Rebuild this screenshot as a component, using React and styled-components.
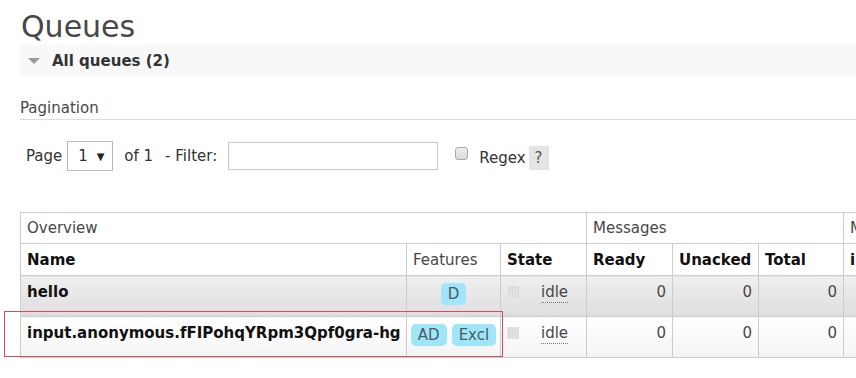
import React from "react";
import styled, { createGlobalStyle } from "styled-components";

const GlobalStyle = createGlobalStyle`
  html, body { margin: 0; padding: 0; background: #fff; overflow: hidden; }
  body { font-family: "DejaVu Sans", Verdana, sans-serif; color: #484848; }
`;

const Page = styled.div`
  position: relative;
  width: 836px;
  height: 378px;
  padding-left: 20px;
  overflow: hidden;
`;

const Title = styled.h1`
  margin: 0 0 2px 1px;
  padding-top: 10px;
  font-size: 30px;
  line-height: 33px;
  font-weight: normal;
  color: #484848;
`;

const SectionBar = styled.div`
  display: flex;
  align-items: center;
  height: 31px;
  background: #f8f8f8;
  font-size: 15px;
  font-weight: bold;
  color: #333;
`;

const Arrow = styled.span`
  width: 0;
  height: 0;
  margin: 0 12px 0 8px;
  border-left: 6px solid transparent;
  border-right: 6px solid transparent;
  border-top: 6px solid #999;
`;

const SubHeading = styled.h3`
  margin: 22px 0 0;
  padding-bottom: 1px;
  font-size: 15px;
  line-height: 20px;
  font-weight: normal;
  color: #484848;
  border-bottom: 1px solid #ddd;
`;

const FilterRow = styled.div`
  display: flex;
  align-items: center;
  height: 30px;
  margin-top: 21px;
  padding-left: 6px;
  font-size: 15px;
  color: #333;
`;

const Label = styled.span`
  margin-left: ${(p) => p.$ml || 0}px;
  margin-top: ${(p) => p.$mt || 0}px;
`;

const Select = styled.div`
  display: flex;
  align-items: center;
  justify-content: space-between;
  box-sizing: border-box;
  width: 46px;
  height: 30px;
  margin-left: 5px;
  padding: 0 8px 0 10px;
  border: 1px solid #b8b8b8;
  background: #fff;
  font-size: 15px;
  color: #333;
`;

const Caret = styled.span`
  font-size: 10px;
  color: #222;
`;

const TextInput = styled.div`
  box-sizing: border-box;
  width: 210px;
  height: 28px;
  margin-left: 11px;
  border: 1px solid #c8c8c8;
  background: #fff;
`;

const Checkbox = styled.span`
  box-sizing: border-box;
  width: 13px;
  height: 13px;
  margin-left: 17px;
  margin-top: -5px;
  border: 1px solid #aaa;
  border-radius: 3px;
  background: linear-gradient(#eee, #d8d8d8);
`;

const Help = styled.span`
  display: inline-flex;
  align-items: center;
  justify-content: center;
  width: 20px;
  height: 24px;
  margin-left: 3px;
  margin-top: 4px;
  background: #e4e4e4;
  color: #555;
  font-size: 15px;
`;

const Table = styled.table`
  margin-top: 41px;
  border-collapse: collapse;
  table-layout: fixed;
  width: 960px;
  font-size: 15px;
`;

const GroupTh = styled.th`
  height: 30px;
  padding: 0 6px;
  border: 1px solid #ccc;
  text-align: left;
  font-weight: normal;
  color: #484848;
  white-space: nowrap;
`;

const HeadTh = styled.th`
  height: 31px;
  padding: 0 6px;
  border: 1px solid #ccc;
  text-align: left;
  font-weight: ${(p) => (p.$light ? "normal" : "bold")};
  color: ${(p) => (p.$light ? "#484848" : "#111")};
  white-space: nowrap;
`;

const Row = styled.tr`
  td {
    background: ${(p) =>
      p.$alt ? "linear-gradient(#efefef, #dedede)" : "linear-gradient(#fff, #f4f4f4)"};
  }
`;

const Cell = styled.td`
  height: 41px;
  box-sizing: border-box;
  padding: 7px ${(p) => (p.$tight ? 3 : 6)}px 0;
  border: 1px solid #ccc;
  border-top: none;
  vertical-align: top;
  text-align: ${(p) => p.$align || "left"};
  white-space: nowrap;
  color: #484848;
  line-height: 19px;
`;

const Name = styled.span`
  font-weight: bold;
  color: #111;
`;

const Badges = styled.div`
  display: flex;
  justify-content: center;
  gap: 5px;
`;

const Badge = styled.span`
  padding: 1px 7px;
  border-radius: 5px;
  background: #9fe6fb;
  color: #4c5a63;
  line-height: 20px;
`;

const StateWrap = styled.div`
  display: flex;
  align-items: flex-start;
`;

const StateSquare = styled.span`
  width: 12px;
  height: 12px;
  margin-top: 3px;
  background: repeating-linear-gradient(90deg, #e2e2e2 0 2px, #d8d8d8 2px 3px);
`;

const Abbr = styled.span`
  margin-left: 22px;
  border-bottom: 1px dotted #777;
  line-height: 19px;
`;

const Highlight = styled.div`
  position: absolute;
  left: 4px;
  top: 311px;
  width: 499px;
  height: 46px;
  box-sizing: border-box;
  border: 1px solid #d24d5c;
  pointer-events: none;
`;

const queues = [
  { name: "hello", features: ["D"], alt: true },
  { name: "input.anonymous.fFIPohqYRpm3Qpf0gra-hg", features: ["AD", "Excl"], alt: false },
];

export default function App() {
  return (
    <>
      <GlobalStyle />
      <Page>
        <Title>Queues</Title>
        <SectionBar>
          <Arrow />
          All queues (2)
        </SectionBar>
        <SubHeading>Pagination</SubHeading>
        <FilterRow>
          <Label>Page</Label>
          <Select>
            1 <Caret>▼</Caret>
          </Select>
          <Label $ml={11}>of 1</Label>
          <Label $ml={12}>- Filter:</Label>
          <TextInput />
          <Checkbox />
          <Label $ml={11} $mt={4}>Regex</Label>
          <Help>?</Help>
        </FilterRow>
        <Table>
          <colgroup>
            <col style={{ width: 386 }} />
            <col style={{ width: 94 }} />
            <col style={{ width: 86 }} />
            <col style={{ width: 86 }} />
            <col style={{ width: 86 }} />
            <col style={{ width: 85 }} />
            <col style={{ width: 137 }} />
          </colgroup>
          <thead>
            <tr>
              <GroupTh colSpan={3}>Overview</GroupTh>
              <GroupTh colSpan={3}>Messages</GroupTh>
              <GroupTh>Message rates</GroupTh>
            </tr>
            <tr>
              <HeadTh>Name</HeadTh>
              <HeadTh $light>Features</HeadTh>
              <HeadTh>State</HeadTh>
              <HeadTh>Ready</HeadTh>
              <HeadTh>Unacked</HeadTh>
              <HeadTh>Total</HeadTh>
              <HeadTh>incoming</HeadTh>
            </tr>
          </thead>
          <tbody>
            {queues.map((q) => (
              <Row key={q.name} $alt={q.alt}>
                <Cell>
                  <Name>{q.name}</Name>
                </Cell>
                <Cell $tight>
                  <Badges>
                    {q.features.map((f) => (
                      <Badge key={f}>{f}</Badge>
                    ))}
                  </Badges>
                </Cell>
                <Cell>
                  <StateWrap>
                    <StateSquare />
                    <Abbr>idle</Abbr>
                  </StateWrap>
                </Cell>
                <Cell $align="right">0</Cell>
                <Cell $align="right">0</Cell>
                <Cell $align="right">0</Cell>
                <Cell $align="right"></Cell>
              </Row>
            ))}
          </tbody>
        </Table>
        <Highlight />
      </Page>
    </>
  );
}
